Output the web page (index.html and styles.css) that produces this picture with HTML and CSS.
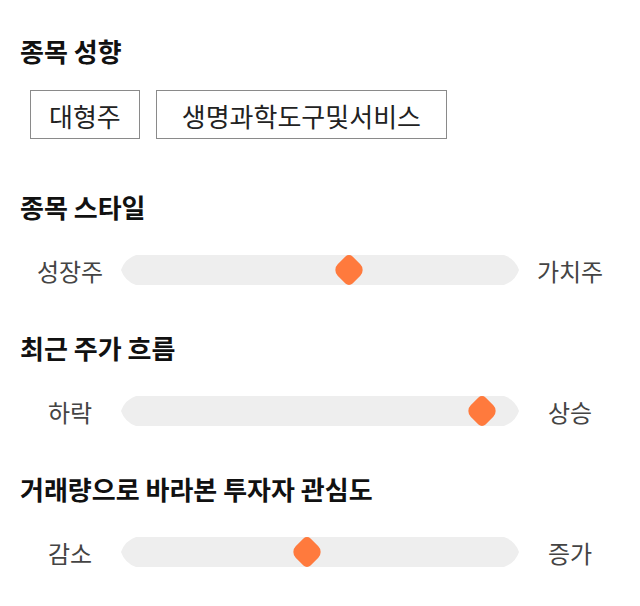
FILE: index.html
```html
<!DOCTYPE html>
<html>
<head>
    <title>종목 분석</title>
    <link rel="stylesheet" href="styles.css">
</head>
<body>
    <div class="container">
        <div class="section">
            <h3>종목 성향</h3>
            <div class="chips">
                <span class="chip">대형주</span>
                <span class="chip chip-wide">생명과학도구및서비스</span>
            </div>
        </div>
        <div class="section">
            <h3>종목 스타일</h3>
            <div class="slider-row">
                <span class="side">성장주</span>
                <div class="track">
                    <svg class="track-bg" viewBox="0 0 398 30" preserveAspectRatio="none">
                        <path d="M15 0H383A24 24 0 0 1 398 15A24 24 0 0 1 383 30H15A24 24 0 0 1 0 15A24 24 0 0 1 15 0Z"/>
                    </svg>
                    <span class="thumb" style="left: 228px"></span>
                </div>
                <span class="side">가치주</span>
            </div>
        </div>
        <div class="section">
            <h3>최근 주가 흐름</h3>
            <div class="slider-row">
                <span class="side">하락</span>
                <div class="track">
                    <svg class="track-bg" viewBox="0 0 398 30" preserveAspectRatio="none">
                        <path d="M15 0H383A24 24 0 0 1 398 15A24 24 0 0 1 383 30H15A24 24 0 0 1 0 15A24 24 0 0 1 15 0Z"/>
                    </svg>
                    <span class="thumb" style="left: 361px"></span>
                </div>
                <span class="side">상승</span>
            </div>
        </div>
        <div class="section">
            <h3>거래량으로 바라본 투자자 관심도</h3>
            <div class="slider-row">
                <span class="side">감소</span>
                <div class="track">
                    <svg class="track-bg" viewBox="0 0 398 30" preserveAspectRatio="none">
                        <path d="M15 0H383A24 24 0 0 1 398 15A24 24 0 0 1 383 30H15A24 24 0 0 1 0 15A24 24 0 0 1 15 0Z"/>
                    </svg>
                    <span class="thumb" style="left: 186px"></span>
                </div>
                <span class="side">증가</span>
            </div>
        </div>
    </div>
</body>
</html>
```

FILE: styles.css
```css
body {
    margin: 0;
    background: #fff;
    font-family: "Noto Sans CJK KR", "Noto Sans", sans-serif;
    color: #111;
}
.container {
    width: 600px;
    padding: 36px 20px 0;
}
.section {
    margin-bottom: 48px;
}
h3 {
    margin: 0 0 24px;
    font-size: 26px;
    line-height: 30px;
    font-weight: 700;
    color: #111;
}
.chips {
    display: flex;
    gap: 16px;
    padding: 0 0 5px 10px;
}
.chip {
    display: flex;
    align-items: center;
    height: 45px;
    padding: 2px 18px 0;
    border: 1px solid #8a8a8a;
    font-size: 26px;
    color: #222;
}
.chip-wide {
    padding: 2px 25px 0;
}
.slider-row {
    display: flex;
    align-items: center;
    height: 30px;
    margin-top: 33px;
}
.side {
    width: 100px;
    text-align: center;
    font-size: 24px;
    color: #444;
}
.track {
    position: relative;
    width: 398px;
    height: 30px;
    margin: 0 1px;
}
.track-bg {
    display: block;
    width: 100%;
    height: 100%;
    fill: #eeeeee;
}
.thumb {
    position: absolute;
    top: 3px;
    width: 24px;
    height: 24px;
    margin-left: -12px;
    background: #ff7a3d;
    border-radius: 5px 8px;
    transform: rotate(45deg);
}
```
